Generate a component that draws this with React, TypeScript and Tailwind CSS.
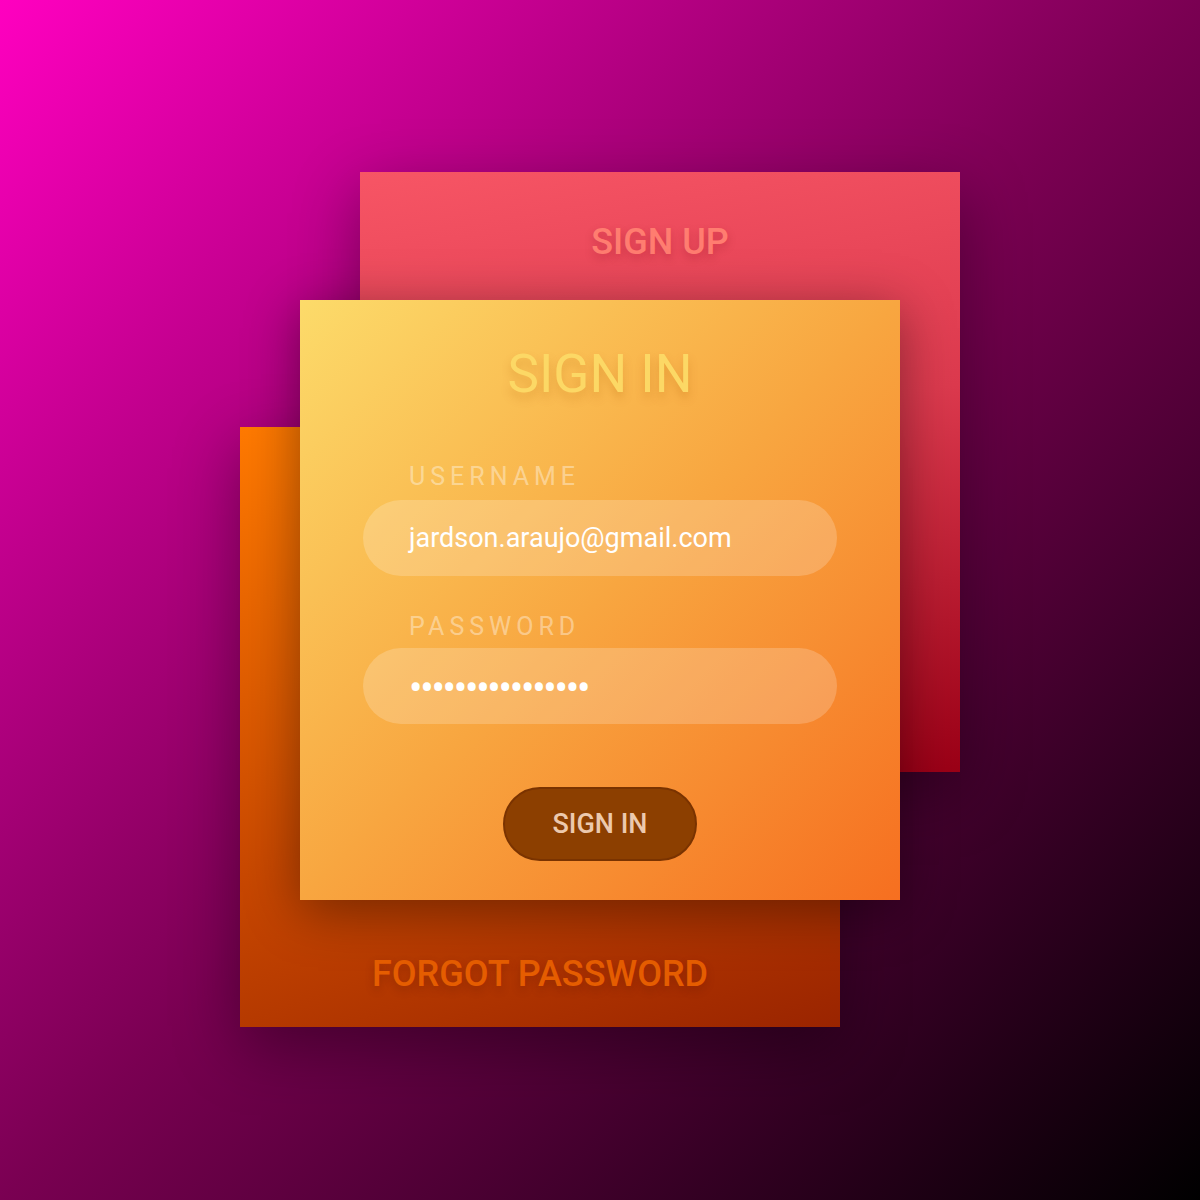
import React from "react";

const font = { fontFamily: "Roboto, 'Liberation Sans', sans-serif" };

function Field({ label, value, secret }: { label: string; value: string; secret?: boolean }) {
  return (
    <div className="flex flex-col">
      <span className="ml-[46px] text-[25px] leading-[25px] tracking-[0.2em] text-white/40">{label}</span>
      <div
        className={
          secret
            ? "mt-[9px] flex h-[76px] items-center rounded-full bg-white/20 px-[46px]"
            : "mt-[11px] flex h-[76px] items-center rounded-full bg-white/20 px-[46px]"
        }
      >
        {secret ? (
          <span className="pt-[6px] text-[40px] leading-[40px] tracking-[-2.3px] text-white">{value}</span>
        ) : (
          <span className="text-[27px] text-white">{value}</span>
        )}
      </div>
    </div>
  );
}

export default function App() {
  return (
    <div
      style={font}
      className="relative h-[1200px] w-[1200px] overflow-hidden bg-[linear-gradient(135deg,#ff00c0_0%,#7a0052_50%,#000000_100%)]"
    >
      {/* sign up card */}
      <div className="absolute left-[360px] top-[172px] flex h-[600px] w-[600px] justify-center bg-[linear-gradient(170deg,#f75565_0%,#dc3a4e_45%,#9a0016_100%)] pt-[49px] shadow-[0_20px_60px_rgba(0,0,0,0.35)]">
        <span className="text-[36px] font-medium leading-[42px] text-[#ff7d70] [text-shadow:0_4px_8px_rgba(120,0,20,0.25)]">
          SIGN UP
        </span>
      </div>

      {/* forgot password card */}
      <div className="absolute left-[240px] top-[427px] flex h-[600px] w-[600px] items-end justify-center bg-[linear-gradient(160deg,#ff7a00_0%,#c84800_55%,#9a2400_100%)] pb-[32px] shadow-[0_20px_60px_rgba(0,0,0,0.35)]">
        <span className="text-[36px] font-medium leading-[42px] text-[#e55d00] [text-shadow:0_4px_8px_rgba(90,20,0,0.3)]">
          FORGOT PASSWORD
        </span>
      </div>

      {/* sign in card */}
      <div className="absolute left-[300px] top-[300px] flex h-[600px] w-[600px] flex-col bg-[linear-gradient(135deg,#fcdb6a_0%,#f8a640_50%,#f66f20_100%)] px-[63px] pt-[46px] shadow-[0_10px_50px_rgba(0,0,0,0.4)]">
        <h1 className="text-center text-[53px] font-normal leading-[56px] text-[#fcd865] [text-shadow:0_6px_10px_rgba(180,90,0,0.25)]">
          SIGN IN
        </h1>
        <div className="mt-[62px]">
          <Field label="USERNAME" value="jardson.araujo@gmail.com" />
        </div>
        <div className="mt-[38px]">
          <Field label="PASSWORD" value="••••••••••••••••" secret />
        </div>
        <div className="mt-[63px] flex justify-center">
          <button className="h-[74px] w-[194px] rounded-full border-2 border-[#7a3300] bg-[#8c3f00] text-[27px] font-medium text-[#ecc9ad]">
            SIGN IN
          </button>
        </div>
      </div>
    </div>
  );
}
